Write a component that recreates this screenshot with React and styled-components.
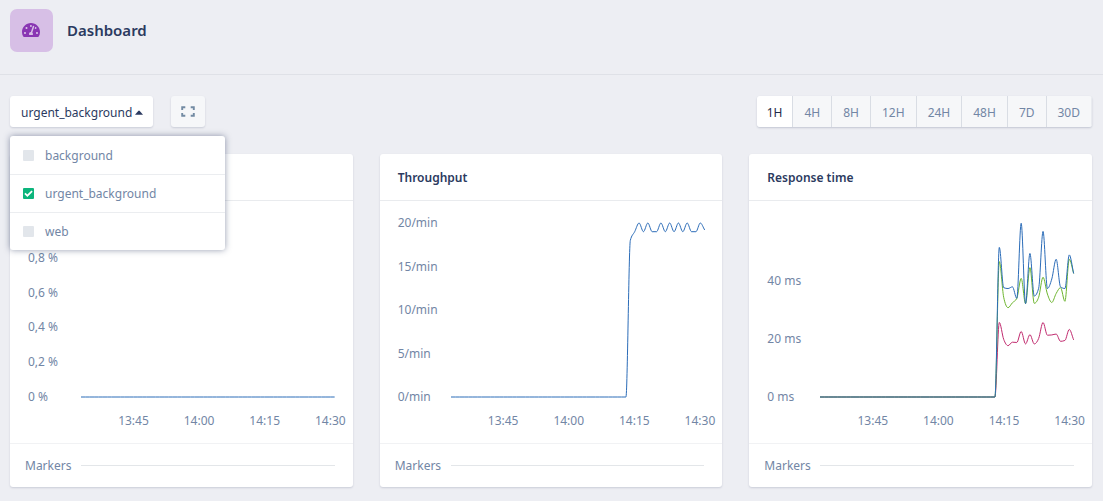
import React, { useState } from "react";
import styled, { createGlobalStyle } from "styled-components";
import { FaTachometerAlt } from "react-icons/fa";

const GlobalStyle = createGlobalStyle`
  *, *::before, *::after { box-sizing: border-box; }
  body {
    margin: 0;
    background: #edeef3;
    color: #7286a5;
    font-family: "Noto Sans", "Open Sans", sans-serif;
    font-size: 12px;
    line-height: 18px;
  }
  button, input { font: inherit; margin: 0; }
`;

const Header = styled.header`
  display: flex;
  align-items: center;
  gap: 14px;
  height: 75px;
  padding: 0 10px 13px;
  border-bottom: 1px solid #dfe1e7;
`;

const AppIcon = styled.span`
  display: grid;
  place-items: center;
  width: 43px;
  height: 43px;
  padding: 0 2px 1px 0;
  border-radius: 7px;
  background: #d7bfe6;
  color: #8936b3;
  font-size: 18px;
`;

const PageTitle = styled.h1`
  margin: 0;
  padding-bottom: 2px;
  color: #2b3a60;
  font-size: 15px;
  font-weight: 600;
  line-height: 20px;
`;

const Main = styled.main`
  padding: 21px 11px 14px 10px;
`;

const Toolbar = styled.div`
  display: flex;
  align-items: center;
  gap: 18px;
  height: 31px;
  margin-bottom: 27px;
`;

const MenuAnchor = styled.div`
  position: relative;
`;

const Button = styled.button`
  display: flex;
  align-items: center;
  gap: 3px;
  height: 31px;
  padding: ${(p) => (p.$muted ? "0 10px" : "2px 10px 0 11px")};
  border: 0;
  border-radius: 3px;
  background: ${(p) => (p.$muted ? "#f6f7f9" : "#fff")};
  color: ${(p) => (p.$muted ? "#738ba3" : "#2b3a60")};
  box-shadow: 0 1px 2px rgba(43, 58, 96, 0.18);
  cursor: pointer;
`;

const Menu = styled.ul`
  position: absolute;
  z-index: 2;
  top: 40px;
  left: 0;
  width: 215px;
  margin: 0;
  padding: 1px 0 0;
  list-style: none;
  border-radius: 3px;
  background: #fff;
  box-shadow: 0 0 6px rgba(43, 58, 96, 0.5);
`;

const MenuItem = styled.li`
  & + & { border-top: 1px solid #ebedf0; }
`;

const MenuLabel = styled.label`
  display: flex;
  align-items: center;
  gap: 11px;
  height: 37px;
  padding: 0 13px;
  cursor: pointer;
`;

const CheckWrap = styled.span`
  position: relative;
  display: flex;
`;

const Check = styled.input`
  appearance: none;
  width: 11px;
  height: 11px;
  border-radius: 1px;
  background: #e2e6eb;
  &:checked { background: #0cb57c; }
  & + svg { display: none; }
  &:checked + svg { display: block; }
`;

const CheckMark = styled.svg`
  position: absolute;
  inset: 0;
  pointer-events: none;
`;

const Ranges = styled.div`
  display: flex;
  margin-left: auto;
  border-radius: 3px;
  box-shadow: 0 1px 2px rgba(43, 58, 96, 0.22);
  overflow: hidden;
`;

const RangeButton = styled.button`
  height: 31px;
  padding: 2px 11px 0;
  border: 0;
  border-right: 1px solid #d9dde4;
  background: ${(p) => (p.$active ? "#fff" : "#f6f7f9")};
  color: ${(p) => (p.$active ? "#1f2a4a" : "#7286a5")};
  cursor: pointer;
  &:first-child { padding: 2px 10px 0; }
  &:last-child { border-right-color: #e9ebf0; }
`;

const Grid = styled.div`
  display: grid;
  grid-template-columns: repeat(3, minmax(0, 1fr));
  gap: 27px;
`;

const Card = styled.section`
  border-radius: 3px;
  background: #fff;
  box-shadow: 0 1px 2px rgba(43, 58, 96, 0.18);
`;

const CardTitle = styled.h2`
  margin: 0;
  padding: 15px 18px 13px;
  border-bottom: 1px solid #e9ebee;
  color: #2b3a60;
  font-size: 12px;
  font-weight: 600;
  line-height: 18px;
`;

const Chart = styled.div`
  display: grid;
  grid-template-columns: 53px minmax(0, 1fr);
  row-gap: 15px;
  padding: 22px 18px 13px;
`;

const YAxis = styled.div`
  display: flex;
  flex-direction: column;
  justify-content: space-between;
  height: 174px;
  white-space: nowrap;
`;

const YTick = styled.span`
  display: flex;
  align-items: center;
  height: 0;
`;

const Plot = styled.svg`
  display: block;
  width: 100%;
  height: 174px;
  overflow: visible;
`;

const XAxis = styled.div`
  grid-column: 2;
  display: grid;
  grid-template-columns: 12fr 15fr 15fr 15fr 1fr;
`;

const XTick = styled.span`
  display: flex;
  justify-content: center;
  justify-self: end;
  width: 0;
`;

const Markers = styled.footer`
  display: grid;
  grid-template-columns: 56px minmax(0, 1fr);
  align-items: center;
  height: 44px;
  padding: 0 18px 0 15px;
  border-top: 1px solid #f1f2f4;
`;

const MarkerLine = styled.span`
  height: 1px;
  background: #e3e6e9;
`;

const BLUE = "#2b6cb8";
const GREEN = "#6cb52d";
const RED = "#c12a6e";
const MINUTES = 58;
const HEIGHT = 174;

// The service only starts reporting 41 minutes into the window.
const idle = Array(41).fill(0);

const charts = [
  {
    title: "Error rate",
    max: 1,
    ticks: ["1 %", "0,8 %", "0,6 %", "0,4 %", "0,2 %", "0 %"],
    series: [{ color: BLUE, values: Array(59).fill(0) }],
  },
  {
    title: "Throughput",
    max: 20,
    ticks: ["20/min", "15/min", "10/min", "5/min", "0/min"],
    series: [
      {
        color: BLUE,
        values: [...idle, 18, 19, 20, 19, 20, 19, 19, 20, 19, 20, 19, 20, 19, 20, 19, 19, 20, 19.2],
      },
    ],
  },
  {
    title: "Response time",
    max: 60,
    ticks: ["", "40 ms", "20 ms", "0 ms"],
    series: [
      {
        color: RED,
        values: [...idle, 25.7, 19.9, 17.7, 18.9, 18.8, 22.6, 18.3, 21.5, 18.3, 20.2, 25.7, 21.3, 21.4, 21.7, 19.2, 19.5, 23.3, 19.7],
      },
      {
        color: GREEN,
        values: [...idle, 46.7, 34.4, 30.8, 32.5, 34, 40.9, 32.2, 44.6, 32.3, 34.4, 41.3, 35.5, 32.6, 35.7, 37.7, 33, 47.5, 42.6],
      },
      {
        color: BLUE,
        values: [...idle, 51.6, 37.7, 37.4, 38, 34, 59.9, 32.2, 49.5, 34.8, 37.5, 57.1, 37.4, 40.7, 47.5, 38, 37.4, 49, 42.6],
      },
    ],
  },
];

// Monotone cubic interpolation through one point per minute.
function linePath(values, max) {
  const y = values.map((v) => HEIGHT - (v / max) * HEIGHT);
  const d = y.slice(1).map((v, i) => v - y[i]);
  const slope = y.map((_, i) => {
    if (i === 0) return d[0];
    if (i === y.length - 1) return d[i - 1];
    const a = d[i - 1];
    const b = d[i];
    if (a * b <= 0) return 0;
    return Math.sign(a) * Math.min(Math.abs(a), Math.abs(b), Math.abs(a + b) / 4) * 2;
  });
  return y.slice(1).reduce((path, v, i) => {
    const c1 = y[i] + slope[i] / 3;
    const c2 = v - slope[i + 1] / 3;
    return `${path}C${i + 1 / 3},${c1} ${i + 2 / 3},${c2} ${i + 1},${v}`;
  }, `M0,${y[0]}`);
}

function ChartCard({ title, max, ticks, series }) {
  return (
    <Card>
      <CardTitle>{title}</CardTitle>
      <Chart>
        <YAxis>
          {ticks.map((t, i) => (
            <YTick key={i}>{t}</YTick>
          ))}
        </YAxis>
        <Plot viewBox={`0 0 ${MINUTES} ${HEIGHT}`} preserveAspectRatio="none" role="img" aria-label={title}>
          {series.map((s) => (
            <path
              key={s.color}
              d={linePath(s.values, max)}
              fill="none"
              stroke={s.color}
              strokeWidth="1"
              vectorEffect="non-scaling-stroke"
            />
          ))}
        </Plot>
        <XAxis>
          {["13:45", "14:00", "14:15", "14:30"].map((t) => (
            <XTick key={t}>{t}</XTick>
          ))}
        </XAxis>
      </Chart>
      <Markers>
        <span>Markers</span>
        <MarkerLine />
      </Markers>
    </Card>
  );
}

export default function App() {
  const [open, setOpen] = useState(true);
  const [selected, setSelected] = useState("urgent_background");
  const [range, setRange] = useState("1H");

  return (
    <>
      <GlobalStyle />
      <Header>
        <AppIcon>
          <FaTachometerAlt />
        </AppIcon>
        <PageTitle>Dashboard</PageTitle>
      </Header>
      <Main>
        <Toolbar>
          <MenuAnchor>
            <Button type="button" aria-expanded={open} onClick={() => setOpen(!open)}>
              {selected}
              <svg width="8" height="5" viewBox="0 0 8 5" aria-hidden="true">
                <path d="M0 4.7 3.2 .9Q4 .1 4.8 .9L8 4.7Z" fill="currentColor" />
              </svg>
            </Button>
            {open && (
              <Menu>
                {["background", "urgent_background", "web"].map((name) => (
                  <MenuItem key={name}>
                    <MenuLabel>
                      <CheckWrap>
                        <Check
                          type="checkbox"
                          checked={selected === name}
                          onChange={() => setSelected(name)}
                        />
                        <CheckMark width="11" height="11" viewBox="0 0 11 11" aria-hidden="true">
                          <path d="M1.9 5.3 4.4 7.7 9.1 3.2" fill="none" stroke="#fff" strokeWidth="1.7" />
                        </CheckMark>
                      </CheckWrap>
                      {name}
                    </MenuLabel>
                  </MenuItem>
                ))}
              </Menu>
            )}
          </MenuAnchor>
          <Button type="button" $muted aria-label="Full screen">
            <svg width="14" height="11" viewBox="0 0 14 11" aria-hidden="true">
              <path
                d="M1.2 4V1.2H4.3M9.7 1.2H12.8V4M12.8 7V9.8H9.7M4.3 9.8H1.2V7"
                fill="none"
                stroke="currentColor"
                strokeWidth="1.9"
              />
            </svg>
          </Button>
          <Ranges role="group" aria-label="Time range">
            {["1H", "4H", "8H", "12H", "24H", "48H", "7D", "30D"].map((r) => (
              <RangeButton
                key={r}
                type="button"
                $active={r === range}
                aria-pressed={r === range}
                onClick={() => setRange(r)}
              >
                {r}
              </RangeButton>
            ))}
          </Ranges>
        </Toolbar>
        <Grid>
          {charts.map((c) => (
            <ChartCard key={c.title} {...c} />
          ))}
        </Grid>
      </Main>
    </>
  );
}
